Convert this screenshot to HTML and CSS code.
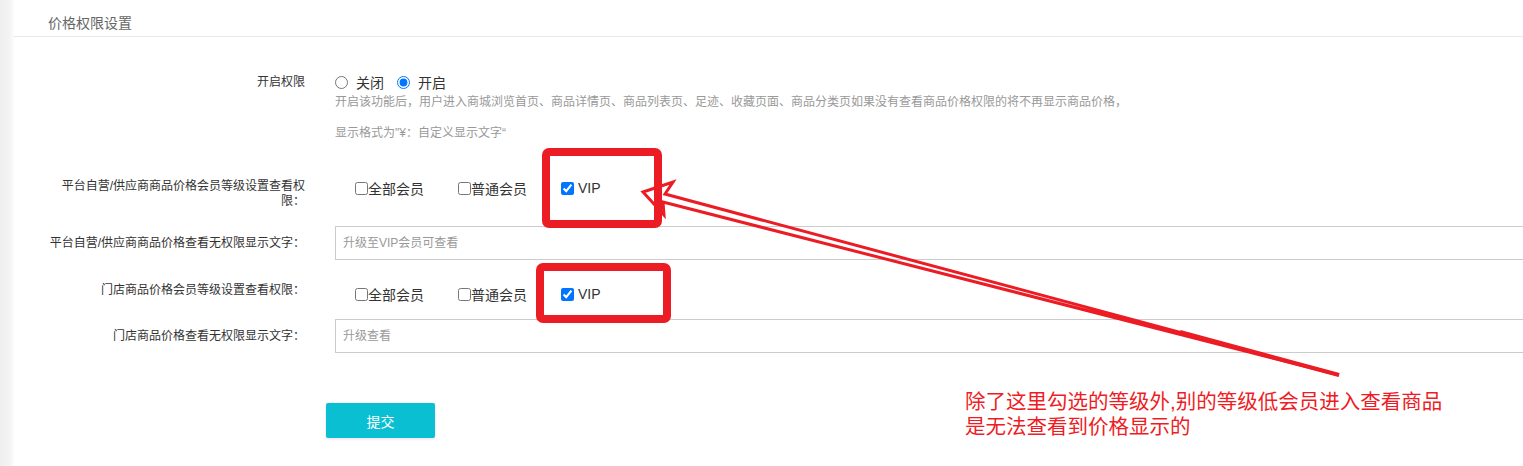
FILE: index.html
```html
<!DOCTYPE html>
<html lang="zh-CN">
<head>
<meta charset="utf-8">
<title>价格权限设置</title>
<link rel="stylesheet" href="styles.css">
</head>
<body>
<div class="page">
  <div class="edge"></div>
  <div class="main">
    <div class="title">价格权限设置</div>
    <form class="form">
      <div class="row row-switch">
        <div class="label">开启权限</div>
        <div class="field">
          <div class="radios">
            <label class="radio"><input type="radio" name="open"><span>关闭</span></label>
            <label class="radio"><input type="radio" name="open" checked><span>开启</span></label>
          </div>
          <div class="hint">开启该功能后，用户进入商城浏览首页、商品详情页、商品列表页、足迹、收藏页面、商品分类页如果没有查看商品价格权限的将不再显示商品价格，</div>
          <div class="hint hint-format">显示格式为"¥：自定义显示文字“</div>
        </div>
      </div>

      <div class="row row-levels row-first">
        <div class="label">平台自营/供应商商品价格会员等级设置查看权限：</div>
        <div class="field">
          <div class="checks checks-up">
            <label class="check"><input type="checkbox"><span>全部会员</span></label>
            <label class="check"><input type="checkbox"><span>普通会员</span></label>
            <label class="check"><input type="checkbox" checked><span class="vip">VIP</span></label>
          </div>
        </div>
      </div>

      <div class="row row-input row-input-a">
        <div class="label">平台自营/供应商商品价格查看无权限显示文字：</div>
        <div class="field">
          <input class="text" type="text" placeholder="升级至VIP会员可查看">
        </div>
      </div>

      <div class="row row-levels row-store">
        <div class="label">门店商品价格会员等级设置查看权限：</div>
        <div class="field">
          <div class="checks checks-down">
            <label class="check"><input type="checkbox"><span>全部会员</span></label>
            <label class="check"><input type="checkbox"><span>普通会员</span></label>
            <label class="check"><input type="checkbox" checked><span class="vip">VIP</span></label>
          </div>
        </div>
      </div>

      <div class="row row-input row-input-b">
        <div class="label">门店商品价格查看无权限显示文字：</div>
        <div class="field">
          <input class="text" type="text" placeholder="升级查看">
        </div>
      </div>

      <div class="actions">
        <button class="submit" type="button">提交</button>
      </div>
    </form>
  </div>

  <svg class="marks" width="1523" height="466" viewBox="0 0 1523 466" aria-hidden="true">
    <rect x="546" y="152" width="112" height="72" rx="3" fill="none" stroke="#ec1c24" stroke-width="8"/>
    <rect x="540" y="267" width="127" height="52" rx="3" fill="none" stroke="#ec1c24" stroke-width="8"/>
    <polygon points="643,192 673,182 665,194 1339,375 663,202 664,215" fill="none" stroke="#ec1c24" stroke-width="3" stroke-linejoin="miter"/>
    <line x1="1180" y1="332" x2="1339" y2="375" stroke="#ec1c24" stroke-width="4"/>
  </svg>
  <div class="note">
    <div class="note-line">除了这里勾选的等级外,别的等级低会员进入查看商品</div>
    <div class="note-line">是无法查看到价格显示的</div>
  </div>
</div>
</body>
</html>
```

FILE: styles.css
```css
html, body {
  margin: 0;
  padding: 0;
  overflow: hidden;
  background: #fff;
}

body {
  font-family: "Liberation Sans", "Noto Sans CJK SC", sans-serif;
  color: #333;
}

.page {
  position: relative;
  display: flex;
  width: 1523px;
  height: 466px;
  overflow: hidden;
}

.edge {
  flex: 0 0 14px;
  background: linear-gradient(to right, #efefef 0, #f3f3f3 9px, #fcfcfc 14px);
}

.main {
  flex: 1;
  min-width: 0;
  overflow: hidden;
}

.title {
  height: 37px;
  box-sizing: border-box;
  padding: 13px 0 0 34px;
  font-size: 14px;
  line-height: 20px;
  color: #666;
  border-bottom: 1px solid #e8e8e8;
}

.form {
  padding: 35px 0 0 31px;
}

.row {
  display: flex;
  align-items: flex-start;
}

.label {
  flex: 0 0 260px;
  margin-right: 30px;
  text-align: right;
  font-size: 12px;
  line-height: 15px;
  color: #333;
}

.field {
  flex: 1;
  min-width: 0;
}

/* switch row */
.row-switch .label {
  line-height: 20px;
}

.radios {
  display: flex;
  align-items: center;
  height: 20px;
}

.radio {
  display: inline-flex;
  align-items: center;
  margin-right: 13px;
  font-size: 14px;
  color: #333;
}

.radio input {
  margin: 0 8px 0 0;
  width: 13px;
  height: 13px;
}

.hint {
  font-size: 12px;
  line-height: 20px;
  color: #999;
  white-space: nowrap;
}

.hint-format {
  margin-top: 11px;
}

/* level checkboxes */
.row-first {
  margin-top: 36px;
}

.row-store {
  margin-top: 23px;
}

.checks {
  display: flex;
  align-items: center;
  height: 20px;
  padding-left: 20px;
}

.checks-up {
  margin-top: -1px;
}

.checks-down {
  margin-top: 1px;
}

.check {
  display: inline-flex;
  align-items: center;
  flex: 0 0 103px;
  font-size: 14px;
  color: #333;
}

.check input {
  margin: 0;
  width: 13px;
  height: 13px;
}

.vip {
  margin-left: 4px;
}

/* text inputs */
.row-input {
  align-items: center;
}

.row-input-a {
  margin-top: 17px;
}

.row-input-b {
  margin-top: 15px;
}

.text {
  display: block;
  width: 1220px;
  height: 34px;
  box-sizing: border-box;
  margin: 0;
  padding: 0 7px;
  border: 1px solid #ccc;
  border-radius: 0;
  font-family: inherit;
  font-size: 12px;
  color: #333;
  outline: none;
}

.text::placeholder {
  color: #999;
}

/* submit */
.actions {
  margin: 50px 0 0 281px;
}

.submit {
  display: block;
  width: 109px;
  height: 35px;
  border: none;
  border-radius: 2px;
  background: #0bbfd3;
  color: #fff;
  font-family: inherit;
  font-size: 14px;
  box-shadow: 0 1px 3px rgba(120, 60, 180, 0.18);
  cursor: pointer;
}

/* annotation layer */
.marks {
  position: absolute;
  left: 0;
  top: 0;
  pointer-events: none;
}

.note {
  position: absolute;
  left: 965px;
  top: 389px;
  font-family: "Liberation Sans", "Noto Sans CJK SC", sans-serif;
  font-size: 20.5px;
  line-height: 25px;
  color: #ee1c24;
  white-space: nowrap;
}

.note-line {
  height: 25px;
}
```
